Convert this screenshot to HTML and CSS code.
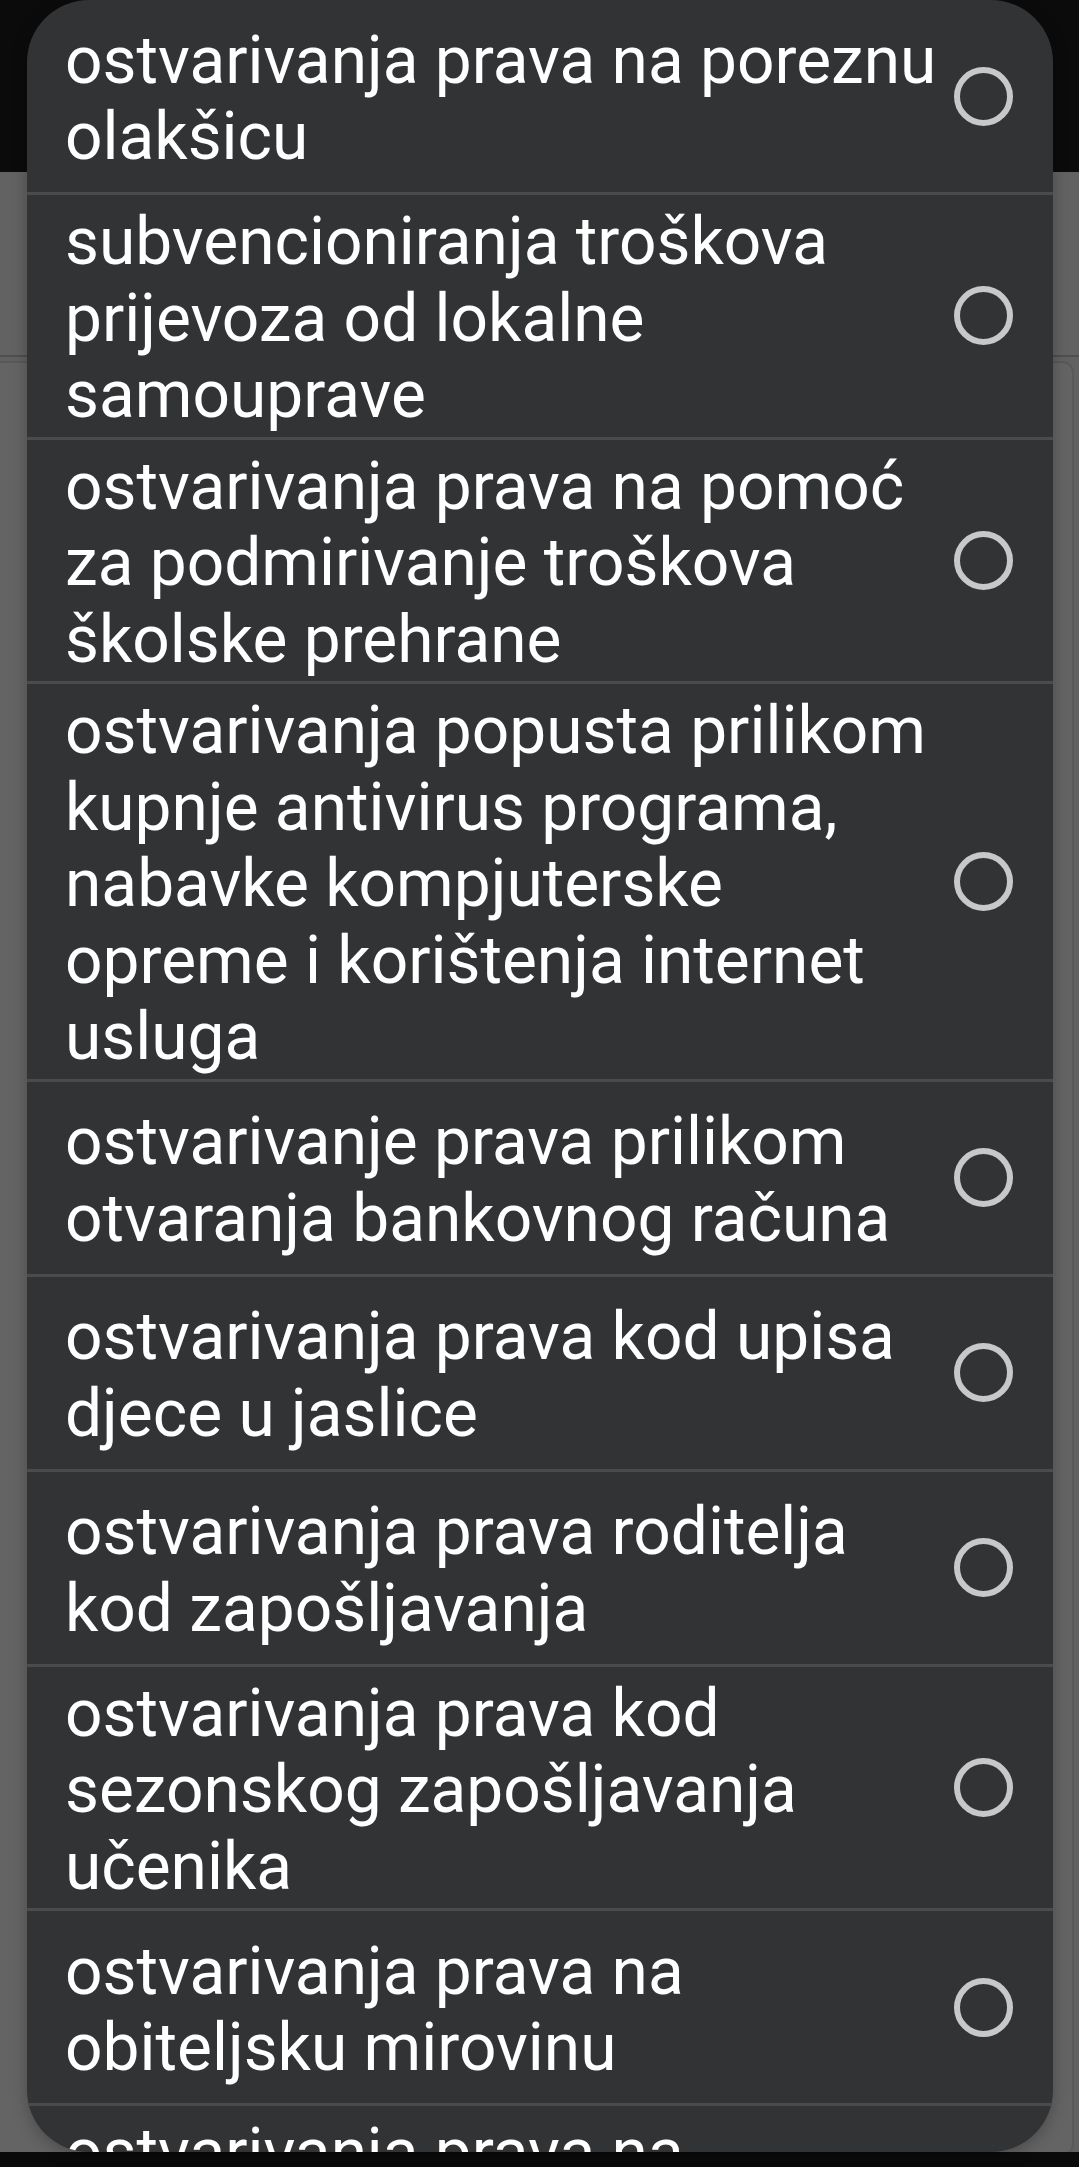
FILE: index.html
```html
<!DOCTYPE html>
<html>
<head>
	<meta charset="UTF-8">
	<meta name="viewport" content="width=device-width, initial-scale=1.0">
	<title>Odabir prava</title>
	<link rel="stylesheet" href="styles.css">
</head>
<body>
	<div class="screen">
		<div class="status-bar"></div>
		<div class="toolbar"></div>
		<div class="content">
			<div class="card"></div>
		</div>
		<div class="nav-bar"></div>
	</div>

	<div class="dialog">
		<ul class="choice-list">
			<li class="choice">
				<span class="label">ostvarivanja prava na poreznu olakšicu</span>
				<span class="radio"></span>
			</li>
			<li class="choice">
				<span class="label">subvencioniranja troškova prijevoza od lokalne samouprave</span>
				<span class="radio"></span>
			</li>
			<li class="choice">
				<span class="label">ostvarivanja prava na pomoć za podmirivanje troškova školske prehrane</span>
				<span class="radio"></span>
			</li>
			<li class="choice">
				<span class="label">ostvarivanja popusta prilikom kupnje antivirus programa, nabavke kompjuterske opreme i korištenja internet usluga</span>
				<span class="radio"></span>
			</li>
			<li class="choice">
				<span class="label">ostvarivanje prava prilikom otvaranja bankovnog računa</span>
				<span class="radio"></span>
			</li>
			<li class="choice">
				<span class="label">ostvarivanja prava kod upisa djece u jaslice</span>
				<span class="radio"></span>
			</li>
			<li class="choice">
				<span class="label">ostvarivanja prava roditelja kod zapošljavanja</span>
				<span class="radio"></span>
			</li>
			<li class="choice">
				<span class="label">ostvarivanja prava kod sezonskog zapošljavanja učenika</span>
				<span class="radio"></span>
			</li>
			<li class="choice">
				<span class="label">ostvarivanja prava na obiteljsku mirovinu</span>
				<span class="radio"></span>
			</li>
			<li class="choice">
				<span class="label">ostvarivanja prava na jednokratnu novčanu pomoć za opremu novorođenčeta</span>
				<span class="radio"></span>
			</li>
		</ul>
	</div>
</body>
</html>
```

FILE: styles.css
```css
html, body {
	margin: 0;
	padding: 0;
}

body {
	width: 1079px;
	height: 2167px;
	overflow: hidden;
	background-color: #5f5f5f;
	font-family: Roboto, "Noto Sans", "Liberation Sans", sans-serif;
	position: relative;
}

/* dimmed app behind the dialog */
.screen {
	height: 100%;
	display: flex;
	flex-direction: column;
}

.status-bar {
	height: 172px;
	background-color: #0b0b0b;
}

.toolbar {
	height: 183px;
	background-color: #626262;
	border-bottom: 2px solid #4f4f4f;
}

.content {
	flex: 1;
	padding: 4px 0 0 0;
	background-color: #616161;
}

.card {
	height: 100%;
	margin: 0 5px 0 -10px;
	border: 2px solid #595959;
	border-radius: 12px;
	background-color: #646464;
}

.nav-bar {
	height: 15px;
	background-color: #0a0a0a;
}

/* dialog */
.dialog {
	position: absolute;
	top: 0;
	left: 27px;
	width: 1026px;
	height: 2152px;
	border-radius: 62px;
	overflow: hidden;
	background-color: #323335;
	box-shadow: 0 4px 16px rgba(0, 0, 0, 0.25);
}

.choice-list {
	list-style-type: none;
	margin: 0;
	padding: 0;
}

.choice {
	display: flex;
	align-items: center;
	box-sizing: border-box;
	min-height: 195px;
	padding: 9px 0 3px 38px;
	border-bottom: 3px solid #4a4b4d;
}

.label {
	flex: 1;
	font-size: 65.8px;
	line-height: 76.5px;
	color: #ffffff;
}

.radio {
	flex-shrink: 0;
	box-sizing: border-box;
	width: 59px;
	height: 59px;
	margin: -6px 40px 0 0;
	border: 6px solid #c8c8c8;
	border-radius: 50%;
}
```
